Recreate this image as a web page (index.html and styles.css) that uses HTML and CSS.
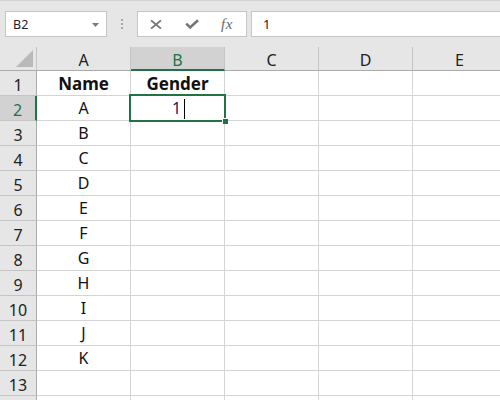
FILE: index.html
```html
<!DOCTYPE html>
<html>
<head>
<meta charset="utf-8">
<link rel="stylesheet" href="styles.css">
</head>
<body>
<div class="toolbar">
  <div class="namebox">
    <span class="nb-text">B2</span>
    <svg class="nb-arrow" width="7" height="4" viewBox="0 0 7 4"><path d="M0 0H7L3.5 4Z" fill="#7a7a7a"/></svg>
  </div>
  <div class="sep"><i></i><i></i><i></i></div>
  <div class="btns">
    <svg class="ic" width="12" height="9" viewBox="0 0 12 9"><path d="M1 0.3L11 8.7M11 0.3L1 8.7" stroke="#747474" stroke-width="1.7" fill="none"/></svg>
    <svg class="ic" width="14" height="10" viewBox="0 0 14 10"><path d="M1.2 4.6L5.2 8.4L13 1.2" stroke="#747474" stroke-width="2.6" fill="none"/></svg>
    <span class="fx">fx</span>
  </div>
  <div class="formula"><span>1</span></div>
</div>
<div class="sheet">
  <div class="corner"><svg width="17" height="17" viewBox="0 0 17 17"><path d="M17 0V17H0Z" fill="#b9b9b9"/></svg></div>
  <div class="ch">A</div>
  <div class="ch sel">B</div>
  <div class="ch">C</div>
  <div class="ch">D</div>
  <div class="ch">E</div>

  <div class="rh">1</div><div class="c b">Name</div><div class="c b">Gender</div><div class="c"></div><div class="c"></div><div class="c"></div>
  <div class="rh sel">2</div><div class="c">A</div><div class="c active"><span class="edit">1</span><span class="caret"></span><span class="handle"></span></div><div class="c"></div><div class="c"></div><div class="c"></div>
  <div class="rh">3</div><div class="c">B</div><div class="c"></div><div class="c"></div><div class="c"></div><div class="c"></div>
  <div class="rh">4</div><div class="c">C</div><div class="c"></div><div class="c"></div><div class="c"></div><div class="c"></div>
  <div class="rh">5</div><div class="c">D</div><div class="c"></div><div class="c"></div><div class="c"></div><div class="c"></div>
  <div class="rh">6</div><div class="c">E</div><div class="c"></div><div class="c"></div><div class="c"></div><div class="c"></div>
  <div class="rh">7</div><div class="c">F</div><div class="c"></div><div class="c"></div><div class="c"></div><div class="c"></div>
  <div class="rh">8</div><div class="c">G</div><div class="c"></div><div class="c"></div><div class="c"></div><div class="c"></div>
  <div class="rh">9</div><div class="c">H</div><div class="c"></div><div class="c"></div><div class="c"></div><div class="c"></div>
  <div class="rh">10</div><div class="c">I</div><div class="c"></div><div class="c"></div><div class="c"></div><div class="c"></div>
  <div class="rh">11</div><div class="c">J</div><div class="c"></div><div class="c"></div><div class="c"></div><div class="c"></div>
  <div class="rh">12</div><div class="c">K</div><div class="c"></div><div class="c"></div><div class="c"></div><div class="c"></div>
  <div class="rh">13</div><div class="c"></div><div class="c"></div><div class="c"></div><div class="c"></div><div class="c"></div>
  <div class="rh"></div><div class="c"></div><div class="c"></div><div class="c"></div><div class="c"></div><div class="c"></div>
</div>
</body>
</html>
```
FILE: styles.css
```css
* { box-sizing: border-box; }
html, body { margin: 0; padding: 0; }
body {
  width: 500px;
  height: 400px;
  overflow: hidden;
  background: #fff;
  font-family: "Noto Sans", "Liberation Sans", sans-serif;
  color: #000;
}
.toolbar {
  height: 47px;
  background: #e6e6e6;
  border-top: 1px solid #d2d2d2;
  display: flex;
  align-items: flex-start;
  padding-top: 10px;
  padding-left: 5px;
}
.namebox {
  width: 102px;
  height: 26px;
  background: #fff;
  border: 1px solid #c6c6c6;
  display: flex;
  align-items: center;
  justify-content: space-between;
  padding: 0 7px 0 7px;
}
.nb-text { font-size: 12.5px; color: #222; }
.nb-arrow { display: block; margin-top: 1px; }
.sep {
  width: 30px;
  height: 26px;
  display: flex;
  flex-direction: column;
  align-items: center;
  justify-content: center;
  gap: 2px;
}
.sep i {
  display: block;
  width: 2px;
  height: 2px;
  background: #a8a8a8;
}
.btns {
  width: 110px;
  height: 26px;
  background: #fff;
  border: 1px solid #c6c6c6;
  display: flex;
  align-items: center;
  padding-left: 12px;
  gap: 23px;
}
.ic { display: block; }
.fx {
  font-family: "Liberation Serif", serif;
  font-style: italic;
  font-size: 15px;
  color: #6a6a6a;
  margin-left: -1px;
  letter-spacing: 0.5px;
}
.formula {
  flex: 1;
  height: 26px;
  margin-left: 4px;
  margin-right: -2px;
  background: #fff;
  border: 1px solid #c6c6c6;
  display: flex;
  align-items: center;
  padding-left: 11px;
  font-size: 13px;
  color: #222;
}
.sheet {
  display: grid;
  grid-template-columns: 37px repeat(5, 94px);
  grid-template-rows: 24px;
  grid-auto-rows: 25px;
  width: 507px;
}
.corner {
  background: #e6e6e6;
  border-right: 1px solid #c4c4c4;
  border-bottom: 1px solid #ababab;
  display: flex;
  align-items: flex-end;
  justify-content: flex-end;
  padding: 0 3px 3px 0;
}
.corner svg { display: block; }
.ch {
  background: #e6e6e6;
  border-right: 1px solid #c4c4c4;
  border-bottom: 1px solid #ababab;
  font-size: 16px;
  color: #222;
  text-align: center;
  line-height: 27px;
}
.ch.sel {
  background: #d2d2d2;
  color: #217346;
  border-bottom: 2px solid #217346;
}
.rh {
  background: #e6e6e6;
  border-right: 1px solid #ababab;
  border-bottom: 1px solid #c4c4c4;
  font-size: 16px;
  color: #222;
  text-align: center;
  line-height: 28px;
}
.rh.sel {
  background: #d2d2d2;
  color: #217346;
  border-right: 2px solid #217346;
}
.c {
  border-right: 1px solid #d4d4d4;
  border-bottom: 1px solid #d4d4d4;
  font-size: 16px;
  text-align: center;
  line-height: 25px;
  color: #111;
}
.c.b { font-weight: bold; font-size: 17px; }
.active {
  position: relative;
  display: flex;
  justify-content: center;
  align-items: center;
  padding-left: 2px;
}
.active::after {
  content: "";
  position: absolute;
  left: -2px;
  top: -2px;
  right: -2px;
  bottom: -2px;
  border: 2px solid #217346;
}
.edit { color: #2a2050; }
.caret {
  display: inline-block;
  width: 1px;
  height: 20px;
  background: #000;
  margin-left: 3px;
  margin-top: 1px;
}
.handle {
  position: absolute;
  right: -4px;
  bottom: -4px;
  width: 6px;
  height: 6px;
  background: #217346;
  border-left: 1px solid #fff;
  border-top: 1px solid #fff;
  z-index: 2;
}
```
